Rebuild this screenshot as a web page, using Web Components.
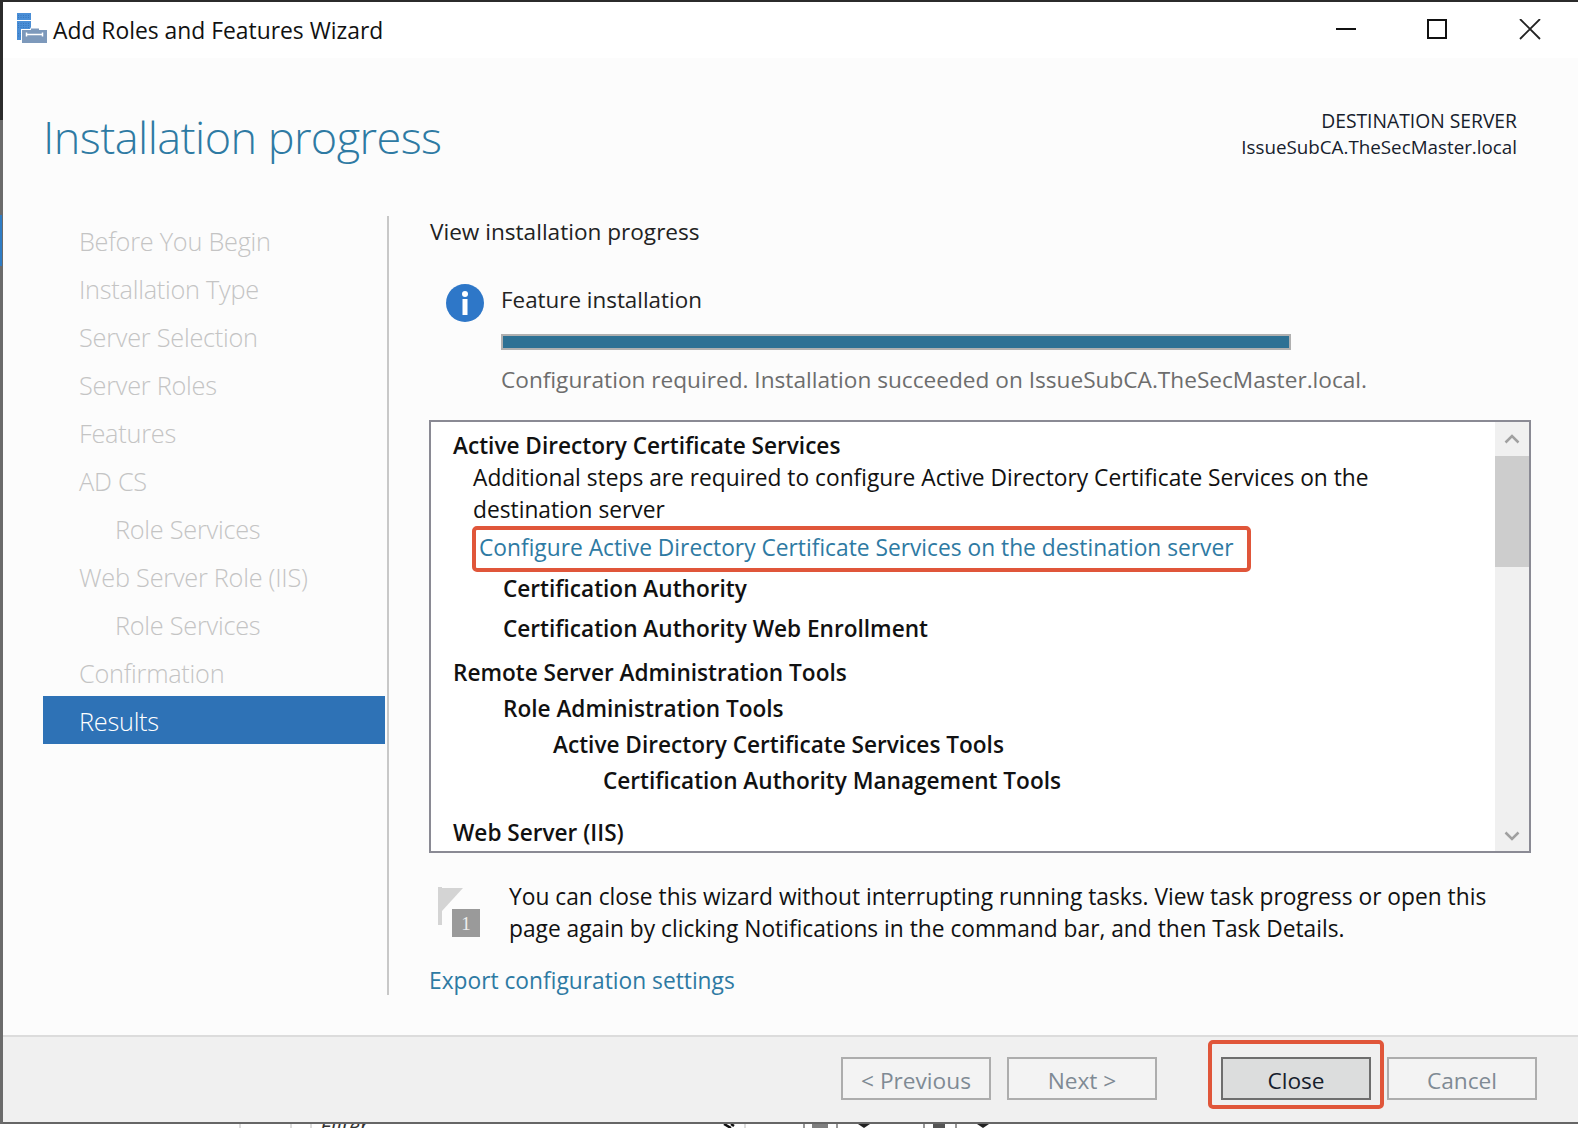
<!DOCTYPE html>
<html>
<head>
<meta charset="utf-8">
<title>Add Roles and Features Wizard</title>
<style>
    html, body { margin: 0; padding: 0; background: #fff; }
    body { font-family: "Open Sans", "Noto Sans", sans-serif; overflow: hidden; }
</style>
</head>
<body>
<wizard-window>
    <title-bar slot="title">Add Roles and Features Wizard</title-bar>
    <wizard-header slot="header" heading="Installation progress" label="DESTINATION SERVER" server="IssueSubCA.TheSecMaster.local"></wizard-header>
    <wizard-nav slot="nav">
        <nav-item>Before You Begin</nav-item>
        <nav-item>Installation Type</nav-item>
        <nav-item>Server Selection</nav-item>
        <nav-item>Server Roles</nav-item>
        <nav-item>Features</nav-item>
        <nav-item>AD CS</nav-item>
        <nav-item sub>Role Services</nav-item>
        <nav-item>Web Server Role (IIS)</nav-item>
        <nav-item sub>Role Services</nav-item>
        <nav-item>Confirmation</nav-item>
        <nav-item active>Results</nav-item>
    </wizard-nav>
    <results-pane slot="main">
        <feature-status title-text="Feature installation" message="Configuration required. Installation succeeded on IssueSubCA.TheSecMaster.local."></feature-status>
        <scroll-list>
            <list-line strong style="--gap:0px;--indent:0px">Active Directory Certificate Services</list-line>
            <list-line style="--gap:0px;--indent:20px">Additional steps are required to configure Active Directory Certificate Services on the<br>destination server</list-line>
            <list-line link style="--gap:6px;--indent:26px">Configure Active Directory Certificate Services on the destination server</list-line>
            <list-line strong style="--gap:9px;--indent:50px">Certification Authority</list-line>
            <list-line strong style="--gap:8px;--indent:50px">Certification Authority Web Enrollment</list-line>
            <list-line strong style="--gap:12px;--indent:0px">Remote Server Administration Tools</list-line>
            <list-line strong style="--gap:4px;--indent:50px">Role Administration Tools</list-line>
            <list-line strong style="--gap:4px;--indent:100px">Active Directory Certificate Services Tools</list-line>
            <list-line strong style="--gap:4px;--indent:150px">Certification Authority Management Tools</list-line>
            <list-line strong style="--gap:20px;--indent:0px">Web Server (IIS)</list-line>
        </scroll-list>
        <task-note>You can close this wizard without interrupting running tasks. View task progress or open this<br>page again by clicking Notifications in the command bar, and then Task Details.</task-note>
        <export-link>Export configuration settings</export-link>
    </results-pane>
    <wizard-footer slot="footer">
        <wizard-button disabled>&lt; Previous</wizard-button>
        <wizard-button disabled>Next &gt;</wizard-button>
        <wizard-button primary style="margin-left:48px">Close</wizard-button>
        <wizard-button disabled>Cancel</wizard-button>
    </wizard-footer>
    <mark-box slot="marks" style="left:472px;top:526px;width:779px;height:46px"></mark-box>
    <mark-box slot="marks" style="left:1208px;top:1040px;width:176px;height:69px"></mark-box>
</wizard-window>
<bottom-strip>Filter</bottom-strip>

<script>
(function () {
    function define(name, css, html, init) {
        class Comp extends HTMLElement {
            constructor() {
                super();
                let root = this.attachShadow({mode: 'open'});
                root.innerHTML = '<style>' + css + '</style>' + html;
            }
            connectedCallback() {
                if (init) init(this, this.shadowRoot);
            }
        }
        customElements.define(name, Comp);
    }

    define('wizard-window', `
        :host { display: flex; position: relative; height: 1124px; box-sizing: border-box; color: #111; }
        .edge { width: 3px; flex: none;
            background:
                linear-gradient(#2f7cc4, #2f7cc4) 0 215px / 2px 51px no-repeat,
                linear-gradient(#2b2b2b, #2b2b2b) 0 0 / 3px 120px no-repeat,
                #6b6b6b; }
        .body { flex: 1; display: flex; flex-direction: column; min-width: 0; border-top: 2px solid #2b2b2b; border-bottom: 2px solid #666; background: #fcfcfc; }
        .main { display: flex; flex: 1; min-height: 0; padding-left: 40px; }
        .divider { width: 2px; height: 779px; margin-left: 2px; background: #c8c8c8; flex: none; }
    `, `
        <div class="edge"></div>
        <div class="body">
            <slot name="title"></slot>
            <slot name="header"></slot>
            <div class="main">
                <slot name="nav"></slot>
                <div class="divider"></div>
                <slot name="main"></slot>
            </div>
            <slot name="footer"></slot>
        </div>
        <slot name="marks"></slot>
    `);

    define('title-bar', `
        :host { display: flex; align-items: center; height: 56px; background: #fff; position: relative; font-size: 22.850px; color: #111; }
        .logo { margin-left: 14px; width: 32px; height: 32px; flex: none; margin-top: -2px; }
        .text { margin-left: 4px; white-space: nowrap; }
        .caps { margin-left: auto; display: flex; margin-top: 0; padding-right: 37px; gap: 70px; }
        .caps svg { width: 22px; height: 22px; display: block; }
        .caps .mid { margin: 0 1px 0 -1px; }
    `, `
        <svg class="logo" viewBox="0 0 32 32">
            <rect x="0" y="0" width="14" height="7" fill="#4a8ed6"/>
            <rect x="0" y="8" width="14" height="19" fill="#4a8ed6"/>
            <path d="M1 2.500h12M1 4.500h12M1 10.500h12M1 12.500h12M1 14.500h12M1 20.500h4M1 23h4" stroke="#2f6fb4" stroke-width="1" stroke-dasharray="1 1.500" opacity=".7"/>
            <path d="M4 16h9l1-2h8l1 2h8v16H4z" fill="#fff"/>
            <path d="M14 15.500h8v2h-8z" fill="#7d99bb"/>
            <rect x="5" y="17" width="25" height="13" fill="#7d99bb"/>
            <path d="M9 21.500h17" stroke="#fff" stroke-width="1.500"/>
            <path d="M9.500 19.500v4M25.500 19.500v4" stroke="#fff" stroke-width="1.500"/>
        </svg>
        <span class="text"><slot></slot></span>
        <div class="caps">
            <svg viewBox="0 0 22 22"><path d="M1 10h20" stroke="#111" stroke-width="2"/></svg>
            <svg class="mid" viewBox="0 0 22 22"><rect x="2" y="1" width="18" height="18" fill="none" stroke="#111" stroke-width="2"/></svg>
            <svg viewBox="0 0 22 22"><path d="M1 0l20 20M21 0L1 20" stroke="#222" stroke-width="1.800" fill="none"/></svg>
        </div>
    `);

    define('wizard-header', `
        :host { display: flex; justify-content: space-between; height: 158px; box-sizing: border-box; padding: 50px 61px 0 40px; }
        .h { font-size: 45px; letter-spacing: -0.55px; font-weight: 300; line-height: 58px; color: #2e7aa3; white-space: nowrap; }
        .dest { text-align: right; line-height: 26px; color: #16202c; white-space: nowrap; }
        .l { font-size: 19.300px; }
        .s { font-size: 18.800px; }
    `, `
        <div class="h"></div>
        <div class="dest"><div class="l"></div><div class="s"></div></div>
    `, function (el, root) {
        root.querySelector('.h').textContent = el.getAttribute('heading');
        root.querySelector('.l').textContent = el.getAttribute('label');
        root.querySelector('.s').textContent = el.getAttribute('server');
    });

    define('wizard-nav', `
        :host { display: block; width: 342px; flex: none; }
    `, `<slot></slot>`);

    define('nav-item', `
        :host { display: block; height: 48px; line-height: 48px; padding-left: 36px; font-size: 25.300px; letter-spacing: -0.25px; font-weight: 300; color: #c4c4c4; white-space: nowrap; }
        :host([sub]) { padding-left: 72px; }
        :host([active]) { background: #2e72b6; color: #fff; }
        span { position: relative; top: 1px; }
    `, `<span><slot></slot></span>`);

    define('results-pane', `
        :host { display: block; flex: none; width: 1102px; margin: -1px 0 0 40px; font-size: 22.750px; line-height: 32px; }
        .head { color: #222; white-space: nowrap; font-size: 22.600px; padding-left: 1px; position: relative; top: 1px; }
    `, `
        <div class="head">View installation progress</div>
        <slot></slot>
    `);

    define('feature-status', `
        :host { display: grid; grid-template-columns: 72px 1fr; margin-top: 37px; }
        .icon { width: 38px; height: 38px; margin: 0 0 -7px 17px; display: block; }
        .title { color: #222; white-space: nowrap; font-size: 22.400px; }
        .bar { grid-column: 2; width: 790px; height: 16px; box-sizing: border-box; border: 2px solid #b0b0b0; background: #2e7194; margin-top: 18px; }
        .msg { grid-column: 2; color: #6d6d6d; margin-top: 14px; white-space: nowrap; font-size: 22.650px; }
    `, `
        <svg class="icon" viewBox="0 0 38 38">
            <circle cx="19" cy="19" r="19" fill="#2e77c8"/>
            <circle cx="19" cy="10" r="3" fill="#fff"/>
            <rect x="16.500" y="15" width="5" height="16" fill="#fff"/>
        </svg>
        <div class="title"></div>
        <div class="bar"></div>
        <div class="msg"></div>
    `, function (el, root) {
        root.querySelector('.title').textContent = el.getAttribute('title-text');
        root.querySelector('.msg').textContent = el.getAttribute('message');
    });

    define('scroll-list', `
        :host { display: flex; height: 433px; box-sizing: border-box; margin-top: 24px; border: 2px solid #8a8a94; background: #fff; overflow: hidden; }
        .content { flex: 1; padding: 8px 0 0 22px; min-width: 0; }
        .track { width: 34px; flex: none; background: #f0f0f0; display: flex; flex-direction: column; }
        .btn { height: 34px; display: flex; align-items: center; justify-content: center; flex: none; }
        .btn.down { padding-top: 3px; box-sizing: border-box; }
        .btn svg { width: 16px; height: 12px; }
        .thumb { height: 111px; background: #cdcdcd; flex: none; }
        .rest { flex: 1; }
    `, `
        <div class="content"><slot></slot></div>
        <div class="track">
            <div class="btn"><svg viewBox="0 0 16 12"><path d="M1.500 9.500L8 3l6.500 6.500" fill="none" stroke="#a0a0a0" stroke-width="2.500"/></svg></div>
            <div class="thumb"></div>
            <div class="rest"></div>
            <div class="btn down"><svg viewBox="0 0 16 12"><path d="M1.500 2.500L8 9l6.500-6.500" fill="none" stroke="#a0a0a0" stroke-width="2.500"/></svg></div>
        </div>
    `);

    define('list-line', `
        :host { display: block; margin-top: var(--gap); padding-left: var(--indent); white-space: nowrap; color: #111; }
        :host([strong]) { font-weight: 600; font-size: 22.600px; }
        :host([link]) { color: #2e7aa3; }
    `, `<slot></slot>`);

    define('task-note', `
        :host { display: flex; margin-top: 28px; padding-left: 1px; color: #111; white-space: nowrap; }
        svg { width: 79px; height: 64px; flex: none; display: block; }
        text { font-family: "Liberation Serif", serif; font-size: 19px; fill: #eee; }
    `, `
        <svg viewBox="0 0 79 64">
            <rect x="8" y="6" width="4" height="38" fill="#d4d4d4"/>
            <path d="M12 7h21L12 30z" fill="#d4d4d4"/>
            <rect x="22" y="28" width="28" height="28" fill="#9a9a9a"/>
            <text x="36" y="49" text-anchor="middle">1</text>
        </svg>
        <div><slot></slot></div>
    `);

    define('export-link', `
        :host { display: block; margin-top: 20px; color: #2e7aa3; white-space: nowrap; }
    `, `<slot></slot>`);

    define('wizard-footer', `
        :host { display: flex; justify-content: flex-end; gap: 16px; height: 87px; box-sizing: border-box; border-top: 2px solid #dcdcdc; background: #f0f0f0; padding: 20px 41px 0 0; }
    `, `<slot></slot>`);

    define('wizard-button', `
        :host { display: flex; align-items: center; justify-content: center; width: 150px; height: 43px; box-sizing: border-box; border: 2px solid #adadad; background: #f3f3f3; color: #7f8a94; font-size: 22.700px; white-space: nowrap; padding-top: 3px; }
        :host([primary]) { border-color: #6e6e6e; background: #dcdddd; color: #16202c; }
    `, `<slot></slot>`);

    define('mark-box', `
        :host { display: block; position: absolute; box-sizing: border-box; border: 4px solid #e0563a; border-radius: 5px; pointer-events: none; }
    `, ``);

    // the window behind the wizard just shows through under its bottom edge
    define('bottom-strip', `
        :host { display: block; height: 4px; overflow: hidden; background: #fff; position: relative; }
        .f { margin-left: 320px; font: italic 22px/16px "Open Sans", sans-serif; color: #333; margin-top: -7px; }
        svg { position: absolute; left: 0; top: 0; }
    `, `
        <div class="f"><slot></slot></div>
        <svg width="1578" height="4" viewBox="0 0 1578 4">
            <path d="M240 0v4M291 0v4M311 0v4M745 0v4" stroke="#bbb" stroke-width="1"/>
            <path d="M724 0l7 4M731 0l3 2" stroke="#111" stroke-width="2.500"/>
            <path d="M804 0v4M837 0v4M924 0v4M956 0v4" stroke="#777" stroke-width="1.500"/>
            <path d="M812 1h16M812 3h16" stroke="#555" stroke-width="1.500"/>
            <rect x="933" y="0" width="12" height="4" fill="#555"/>
            <path d="M858 0h12l-6 4zM977 0h12l-6 4z" fill="#222"/>
        </svg>
    `);
})();
</script>
</body>
</html>
